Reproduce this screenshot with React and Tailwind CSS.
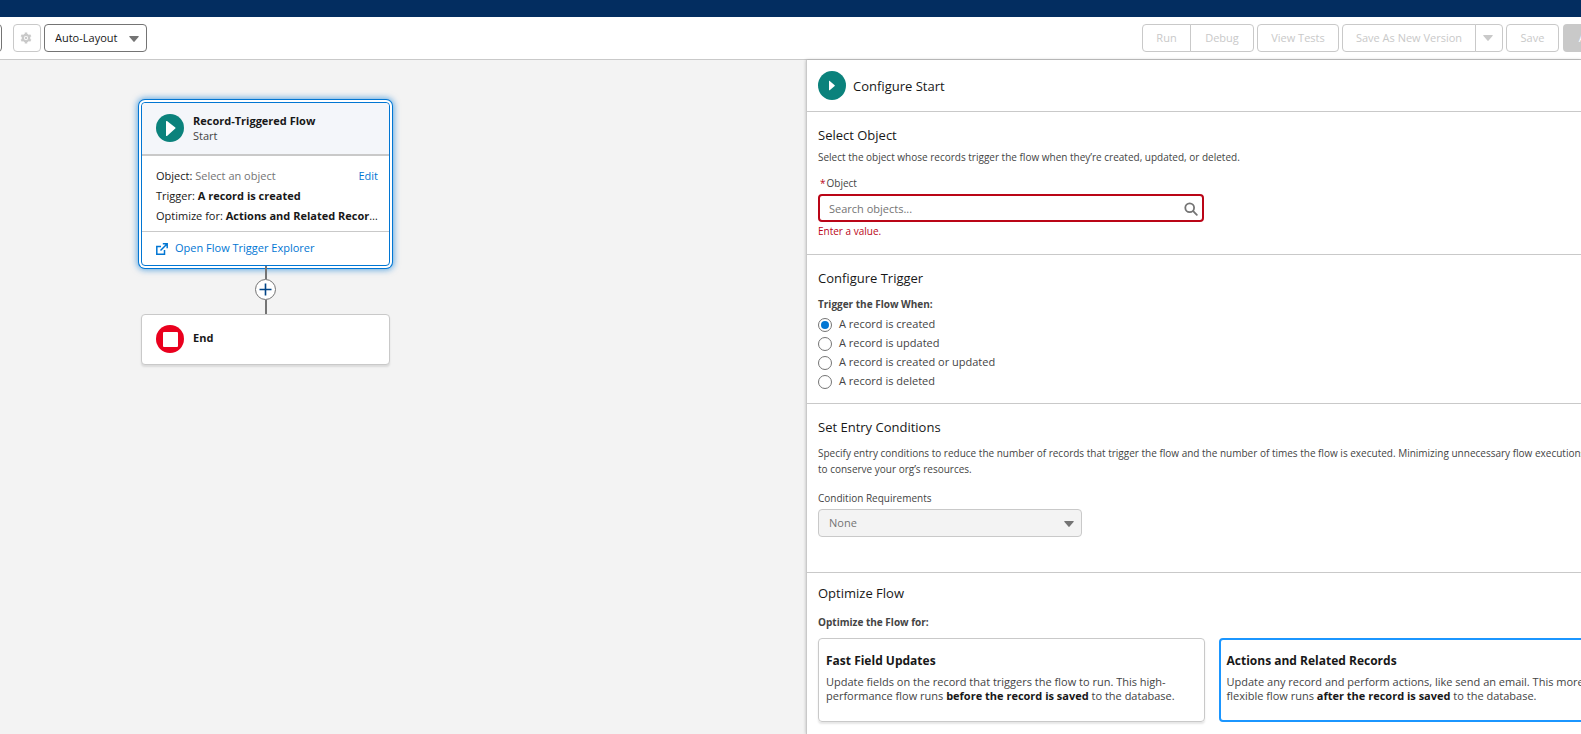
import React, { useState } from 'react';

const TRIGGERS = [
  { id: 'created', label: 'A record is created' },
  { id: 'updated', label: 'A record is updated' },
  { id: 'created-or-updated', label: 'A record is created or updated' },
  { id: 'deleted', label: 'A record is deleted' },
];

function Caret({ className }) {
  return (
    <svg className={className} width="10" height="6" viewBox="0 0 10 6" fill="currentColor" aria-hidden="true">
      <path d="M1 0h8c.7 0 1 .6.5 1.1L5.6 5.6c-.3.4-.9.4-1.2 0L.5 1.1C0 .6.3 0 1 0z" />
    </svg>
  );
}

function GearIcon() {
  return (
    <svg width="12" height="12" viewBox="0 0 24 24" fill="none" stroke="currentColor" aria-hidden="true">
      <circle cx="12" cy="12" r="6.5" strokeWidth="4.5" />
      <circle cx="12" cy="12" r="2.6" fill="currentColor" stroke="none" />
      <path
        strokeWidth="5"
        d="M12 1v4M12 19v4M2.5 6.5l3.4 2M18.1 15.5l3.4 2M2.5 17.5l3.4-2M18.1 8.5l3.4-2"
      />
    </svg>
  );
}

function SearchIcon() {
  return (
    <svg
      className="absolute right-[6px] top-2 text-[#747474]"
      width="14"
      height="14"
      viewBox="0 0 14 14"
      fill="none"
      stroke="currentColor"
      strokeWidth="1.8"
      strokeLinecap="round"
      aria-hidden="true"
    >
      <circle cx="5.7" cy="5.7" r="4.4" />
      <path d="M9.2 9.2l3.6 3.6" />
    </svg>
  );
}

function ExternalIcon() {
  return (
    <svg width="12" height="12" viewBox="0 0 12 12" fill="none" stroke="currentColor" strokeWidth="1.5" aria-hidden="true">
      <path d="M5 3.5H.8v7.7h7.7V7M6.8.8h4.4v4.4M11 1L4.5 7.5" />
    </svg>
  );
}

function Toolbar() {
  const plain = 'h-7 border border-[#c9c9c9] text-[#c9c9c9] bg-white whitespace-nowrap';

  return (
    <div className="flex h-[43px] shrink-0 items-center overflow-hidden border-b border-[#c9c9c9] bg-white">
      <button aria-label="Toggle toolbox" className="-ml-[26px] h-7 w-7 shrink-0 rounded border border-[#747474]" />
      <button disabled aria-label="Settings" className={`${plain} ml-[11px] flex w-7 shrink-0 items-center rounded pl-[6px]`}>
        <GearIcon />
      </button>
      <div className="relative ml-[3px] shrink-0">
        <select
          aria-label="Layout mode"
          className="h-7 w-[103px] appearance-none rounded border border-[#747474] bg-white pl-[10px] text-[#181818]"
        >
          <option>Auto-Layout</option>
        </select>
        <Caret className="pointer-events-none absolute right-2 top-3 text-[#747474]" />
      </div>

      <div className="-mr-[54px] ml-auto flex shrink-0 gap-[3px]">
        <div className="flex">
          <button disabled className={`${plain} w-[49px] rounded-l`}>Run</button>
          <button disabled className={`${plain} -ml-px w-16 rounded-r`}>Debug</button>
        </div>
        <button disabled className={`${plain} w-[82px] rounded`}>View Tests</button>
        <div className="flex">
          <button disabled className={`${plain} w-[134px] rounded-l`}>Save As New Version</button>
          <button disabled aria-label="More save options" className={`${plain} -ml-px flex w-7 items-center rounded-r pl-[7px]`}>
            <Caret />
          </button>
        </div>
        <button disabled className={`${plain} w-[53px] rounded`}>Save</button>
        <button disabled className="ml-px h-7 w-[72px] rounded bg-[#c9c9c9] text-white">Activate</button>
      </div>
    </div>
  );
}

function FlowCanvas() {
  return (
    <main className="flex min-w-0 flex-1 flex-col items-start pl-[141px] pt-[42px] text-[#181818]">
      <div className="flex w-[249px] flex-col items-center">
        <section className="w-full rounded border border-[#0176d3] bg-white shadow-[0_0_0_2px_#fff,0_0_0_3px_#0176d3,0_0_6px_4px_rgba(1,118,211,0.6)]">
          <header className="flex h-[53px] items-center gap-[9px] rounded-t border-b-2 border-[#c9c9c9] bg-[#f4f6fa] pb-[2px] pl-[14px]">
            <svg width="28" height="28" viewBox="0 0 28 28" aria-hidden="true">
              <circle cx="14" cy="14" r="14" fill="#0b827c" />
              <path d="M10 7.5c0-.6.6-.8 1-.4l8.3 6.3c.4.3.4.9 0 1.2L11 21.9c-.4.3-1 .1-1-.4z" fill="#fff" />
            </svg>
            <div className="leading-[15px]">
              <h2 className="font-bold">Record-Triggered Flow</h2>
              <p className="text-[#444]">Start</p>
            </div>
          </header>
          <div className="flex h-[75px] flex-col gap-1 pl-[14px] pr-2 pt-3 leading-4">
            <div className="flex justify-between">
              <p>
                Object: <span className="text-[#747474]">Select an object</span>
              </p>
              <a href="#edit" className="mr-[3px] text-[#0176d3]">Edit</a>
            </div>
            <p>
              Trigger: <b>A record is created</b>
            </p>
            <p className="truncate">
              Optimize for: <b>Actions and Related Records</b>
            </p>
          </div>
          <a
            href="#explorer"
            className="flex h-[34px] items-center gap-[7px] border-t border-[#c9c9c9] pl-[14px] text-[#0176d3]"
          >
            <ExternalIcon />
            Open Flow Trigger Explorer
          </a>
        </section>

        <div className="h-[13px] w-0.5 bg-[#747474]" />
        <button
          aria-label="Add element"
          className="flex size-[21px] items-center justify-center rounded-full border border-[#747474] bg-white text-[#014486]"
        >
          <svg width="13" height="13" viewBox="0 0 13 13" stroke="currentColor" strokeWidth="1.6" aria-hidden="true">
            <path d="M6.5.5v12M.5 6.5h12" />
          </svg>
        </button>
        <div className="h-[14px] w-0.5 bg-[#747474]" />

        <section className="flex h-[51px] w-full items-center gap-[9px] rounded border border-[#c9c9c9] bg-white pb-[2px] pl-[14px] shadow-[0_2px_2px_rgba(0,0,0,0.1)]">
          <svg width="28" height="28" viewBox="0 0 28 28" aria-hidden="true">
            <circle cx="14" cy="14" r="14" fill="#ea001e" />
            <rect x="7" y="7" width="15" height="15" rx="1" fill="#fff" />
          </svg>
          <h2 className="font-bold">End</h2>
        </section>
      </div>
    </main>
  );
}

function OptionCard({ value, title, checked, onSelect, children }) {
  return (
    <label
      className={
        checked
          ? 'relative h-[84px] rounded border-2 border-[#1b96ff] px-[6px] pt-[13px]'
          : 'relative h-[84px] rounded border border-[#c9c9c9] px-[7px] pt-[14px] shadow-[0_2px_2px_rgba(0,0,0,0.1)]'
      }
    >
      <input type="radio" name="optimize" value={value} checked={checked} onChange={onSelect} className="sr-only" />
      <span className="block text-xs font-bold leading-4 text-[#181818]">{title}</span>
      <span className="mt-[6px] block leading-[14px]">{children}</span>
    </label>
  );
}

function ConfigurePanel() {
  const [trigger, setTrigger] = useState('created');
  const [optimize, setOptimize] = useState('actions');

  return (
    <aside className="w-[775px] shrink-0 overflow-hidden border-l border-[#c9c9c9] bg-white text-[#444] shadow-[0_0_3px_rgba(0,0,0,0.25)]">
      <div className="w-[809px]">
        <header className="flex h-[52px] items-center gap-[7px] border-b border-[#c9c9c9] px-[11px]">
          <svg width="28" height="29" viewBox="0 0 28 29" aria-hidden="true">
            <ellipse cx="14" cy="14.5" rx="14" ry="14.5" fill="#0b827c" />
            <path d="M11 10.2c0-.4.4-.5.7-.3l5 4.3c.2.2.2.5 0 .7l-5 4.3c-.3.2-.7.1-.7-.3z" fill="#fff" />
          </svg>
          <h1 className="text-[13px] leading-5 text-[#181818]">Configure Start</h1>
        </header>

        <section className="h-[143px] border-b border-[#c9c9c9] px-[11px] pt-[13px]">
          <h2 className="text-[13px] leading-5 text-[#181818]">Select Object</h2>
          <p className="mt-1 text-[10px] leading-4">
            Select the object whose records trigger the flow when they’re created, updated, or deleted.
          </p>
          <label htmlFor="object" className="mt-[10px] block pl-[2px] text-[10px] leading-4">
            <span className="mr-px text-[#ba0517]">*</span>Object
          </label>
          <div className="relative mt-[3px] w-[386px]">
            <input
              id="object"
              type="text"
              placeholder="Search objects..."
              className="block h-7 w-full rounded border-2 border-[#ba0517] pl-[9px] placeholder:text-[#747474]"
            />
            <SearchIcon />
          </div>
          <p className="mt-px text-[10px] leading-4 text-[#ba0517]">Enter a value.</p>
        </section>

        <section className="h-[149px] border-b border-[#c9c9c9] px-[11px] pt-[13px]">
          <h2 className="text-[13px] leading-5 text-[#181818]">Configure Trigger</h2>
          <fieldset className="mt-2">
            <legend className="text-[10px] font-bold leading-4">Trigger the Flow When:</legend>
            <div className="mt-[3px]">
              {TRIGGERS.map((t) => (
                <label key={t.id} className="flex h-[19px] items-center gap-[7px]">
                  <input
                    type="radio"
                    name="trigger"
                    value={t.id}
                    checked={trigger === t.id}
                    onChange={() => setTrigger(t.id)}
                    className="grid size-[14px] appearance-none place-content-center rounded-full border border-[#747474] checked:before:size-2 checked:before:rounded-full checked:before:bg-[#0176d3] checked:before:content-['']"
                  />
                  {t.label}
                </label>
              ))}
            </div>
          </fieldset>
        </section>

        <section className="h-[169px] border-b border-[#c9c9c9] px-[11px] pt-[13px]">
          <h2 className="text-[13px] leading-5 text-[#181818]">Set Entry Conditions</h2>
          <p className="-mr-[11px] mt-2 text-[10px] leading-4">
            Specify entry conditions to reduce the number of records that trigger the flow and the number of times the
            flow is executed. Minimizing unnecessary flow executions helps to conserve your org’s resources.
          </p>
          <label htmlFor="conditions" className="mt-[13px] block text-[10px] leading-4">
            Condition Requirements
          </label>
          <div className="relative mt-[3px] w-[264px]">
            <select
              id="conditions"
              disabled
              className="block h-7 w-full appearance-none rounded border border-[#c9c9c9] bg-[#f3f3f3] pl-[10px] text-[#747474] opacity-100"
            >
              <option>None</option>
            </select>
            <Caret className="pointer-events-none absolute right-2 top-3 text-[#747474]" />
          </div>
        </section>

        <section className="px-[11px] pt-[10px]">
          <h2 className="text-[13px] leading-5 text-[#181818]">Optimize Flow</h2>
          <fieldset className="mt-[11px]">
            <legend className="text-[10px] font-bold leading-4">Optimize the Flow for:</legend>
            <div className="mt-2 grid grid-cols-2 gap-[14px]">
              <OptionCard
                value="fast"
                title="Fast Field Updates"
                checked={optimize === 'fast'}
                onSelect={() => setOptimize('fast')}
              >
                Update fields on the record that triggers the flow to run. This high-performance flow runs{' '}
                <b className="text-[#181818]">before the record is saved</b> to the database.
              </OptionCard>
              <OptionCard
                value="actions"
                title="Actions and Related Records"
                checked={optimize === 'actions'}
                onSelect={() => setOptimize('actions')}
              >
                Update any record and perform actions, like send an email. This more flexible flow runs{' '}
                <b className="text-[#181818]">after the record is saved</b> to the database.
              </OptionCard>
            </div>
          </fieldset>
        </section>
      </div>
    </aside>
  );
}

export default function App() {
  return (
    <div className="flex h-screen flex-col overflow-hidden bg-[#f3f3f3] font-['Open_Sans','Noto_Sans',sans-serif] text-[11px]">
      <div className="h-[17px] shrink-0 bg-[#032d60]" />
      <Toolbar />
      <div className="flex min-h-0 flex-1">
        <FlowCanvas />
        <ConfigurePanel />
      </div>
    </div>
  );
}
